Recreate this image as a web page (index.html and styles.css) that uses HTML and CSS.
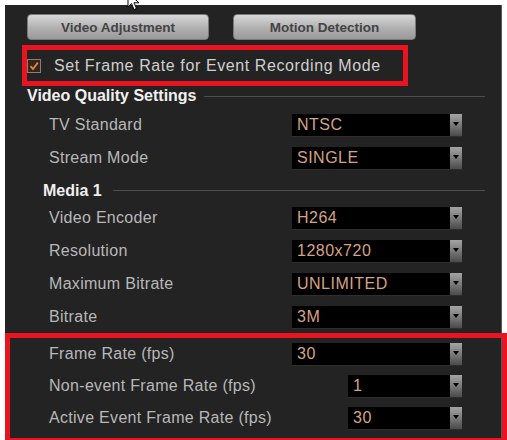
FILE: index.html
```html
<!DOCTYPE html>
<html lang="en">
<head>
    <meta charset="UTF-8">
    <title>Video Settings</title>
    <link rel="stylesheet" href="styles.css">
</head>
<body>

<div class="panel">
    <!-- tab buttons -->
    <div class="tabs">
        <button class="tab">Video Adjustment</button>
        <button class="tab">Motion Detection</button>
    </div>

    <div class="mark mark-check">
        <span class="check">
            <svg width="10" height="10" viewBox="0 0 10 10"><path d="M1.5 5.2 L4 8 L8.8 1.6" fill="none" stroke="#d08850" stroke-width="1.8"/></svg>
        </span>
        <span class="check-text">Set Frame Rate for Event Recording Mode</span>
    </div>

    <div class="section section-main"><span>Video Quality Settings</span><i class="rule"></i></div>

    <div class="row">
        <span class="label">TV Standard</span>
        <div class="select"><span class="value">NTSC</span><span class="arrow"></span></div>
    </div>
    <div class="row">
        <span class="label">Stream Mode</span>
        <div class="select"><span class="value">SINGLE</span><span class="arrow"></span></div>
    </div>

    <div class="section section-sub"><span>Media 1</span><i class="rule"></i></div>

    <div class="row">
        <span class="label">Video Encoder</span>
        <div class="select"><span class="value">H264</span><span class="arrow"></span></div>
    </div>
    <div class="row">
        <span class="label">Resolution</span>
        <div class="select"><span class="value">1280x720</span><span class="arrow"></span></div>
    </div>
    <div class="row">
        <span class="label">Maximum Bitrate</span>
        <div class="select"><span class="value">UNLIMITED</span><span class="arrow"></span></div>
    </div>
    <div class="row">
        <span class="label">Bitrate</span>
        <div class="select"><span class="value">3M</span><span class="arrow"></span></div>
    </div>

    <!-- frame rate group -->
    <div class="mark mark-rates">
        <div class="row">
            <span class="label">Frame Rate (fps)</span>
            <div class="select"><span class="value">30</span><span class="arrow"></span></div>
        </div>
        <div class="row">
            <span class="label label-wide">Non-event Frame Rate (fps)</span>
            <div class="select select-small"><span class="value">1</span><span class="arrow"></span></div>
        </div>
        <div class="row">
            <span class="label label-wide">Active Event Frame Rate (fps)</span>
            <div class="select select-small"><span class="value">30</span><span class="arrow"></span></div>
        </div>
    </div>
</div>

<svg class="cursor" width="14" height="22" viewBox="0 0 14 22">
    <path d="M1 1 L1 15 L4.5 11.5 L7 17.5 L9.5 16.5 L7 10.8 L12 10.8 Z" fill="#fff" stroke="#000" stroke-width="1"/>
</svg>

</body>
</html>
```

FILE: styles.css
```css
body {
    margin: 0;
    background-color: #ffffff;
    font-family: "Liberation Sans", Arial, sans-serif;
    position: relative;
    overflow: hidden;
    height: 440px;
}
.panel {
    margin: 5px 5px 0 5px;
    height: 435px;
    background-color: #232323;
    border-right: 1px solid #5a5a5a;
    padding-top: 9px;
    box-sizing: border-box;
}
.tabs {
    display: flex;
    gap: 24px;
    padding-left: 22px;
}
.tab {
    width: 182px;
    height: 26px;
    padding: 0;
    border: 1px solid #7a7a7a;
    border-radius: 4px;
    background: linear-gradient(#d8d8d8, #b0b0b0 55%, #999999);
    color: #444444;
    font-family: "Liberation Sans", Arial, sans-serif;
    font-size: 13.5px;
    font-weight: bold;
}
.tab + .tab {
    width: 183px;
}

/* red annotation frames */
.mark {
    border: 5px solid #ea1420;
    box-sizing: border-box;
}
.mark-check {
    margin: 5px 0 0 17px;
    width: 386px;
    height: 41px;
    display: flex;
    align-items: center;
}
.check {
    width: 14px;
    height: 14px;
    box-sizing: border-box;
    border: 1px solid #8a8078;
    background: #3a2418;
    display: flex;
    align-items: center;
    justify-content: center;
}
.check-text {
    margin-left: 13px;
    color: #cfcfcf;
    font-size: 16px;
    letter-spacing: 0.6px;
}
.mark-rates {
    margin-right: -6px;
    height: 110px;
}
.mark-rates .row {
    height: 32px;
    padding-left: 39px;
}

.section {
    display: flex;
    align-items: center;
    color: #f0f0f0;
    font-size: 16px;
    font-weight: bold;
    padding-right: 16px;
}
.section-main {
    height: 20px;
    margin-bottom: 2px;
    padding-left: 22px;
}
.section-sub {
    height: 27px;
    padding-top: 6px;
    box-sizing: border-box;
    padding-left: 38px;
}
.rule {
    flex: 1;
    height: 1px;
    margin-left: 7px;
    background-color: #4e4e4e;
}
.section-sub .rule {
    margin-left: 11px;
}

.row {
    display: flex;
    align-items: center;
    height: 33px;
    padding-left: 44px;
}
.label {
    width: 243px;
    flex: none;
    color: #b8b8b8;
    font-size: 16px;
    letter-spacing: 0.3px;
}
.label-wide {
    width: 299px;
}
.select {
    width: 170px;
    height: 22px;
    display: flex;
    background-color: #000;
    box-shadow: 0 1px 0 #2e2e2e;
}
.select-small {
    width: 114px;
}
.value {
    flex: 1;
    padding-left: 5px;
    line-height: 22px;
    color: #d4a286;
    font-size: 16px;
    letter-spacing: 0.5px;
}
.arrow {
    width: 12px;
    position: relative;
    background: linear-gradient(#a4a4a4, #7a7a7a 50%, #4a4a4a);
}
.arrow::after {
    content: "";
    position: absolute;
    left: 3px;
    top: 8px;
    border-left: 3px solid transparent;
    border-right: 3px solid transparent;
    border-top: 4px solid #000;
}

.cursor {
    position: absolute;
    left: 127px;
    top: -8px;
}
```
